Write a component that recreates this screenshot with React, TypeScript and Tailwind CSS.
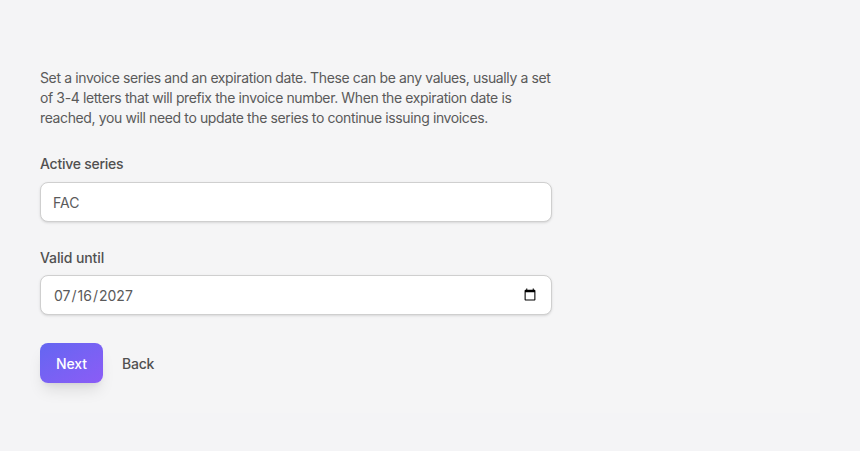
export default function App() {
  return (
    <div className="min-h-[451px] bg-[#f4f4f6] px-10 pt-10 font-['Inter',sans-serif]">
      <div className="h-[373px] bg-[#f5f5f6] pt-7">
        <div className="w-[512px]">
          <p className="text-[14px] leading-[20px] text-[#5a5a5a] tracking-[-0.38px]">
            Set a invoice series and an expiration date. These can be any values, usually a set of 3-4 letters that will prefix the invoice number. When the expiration date is reached, you will need to update the series to continue issuing invoices.
          </p>
          <label className="mt-[26px] block text-[14px] leading-[20px] font-[450] text-[#505050] tracking-[-0.25px]">Active series</label>
          <input defaultValue="FAC" className="mt-2 block h-10 w-full rounded-lg border border-[#cfcfcf] bg-white px-3 text-[14px] text-[#5a5a5a] shadow-sm outline-none" />
          <label className="mt-[26px] block text-[14px] leading-[20px] font-[450] text-[#505050] tracking-[-0.1px]">Valid until</label>
          <input type="date" defaultValue="2027-07-16" className="mt-[7px] block h-10 w-full rounded-lg border border-[#cfcfcf] bg-white px-3 text-[14px] text-[#5a5a5a] shadow-sm outline-none" />
          <div className="mt-7 flex items-center gap-[19px]">
            <button className="h-10 w-[63px] rounded-lg bg-gradient-to-br from-[#6366f1] to-[#8b5cf6] text-[14px] font-[450] text-white shadow-lg tracking-[-0.1px]">Next</button>
            <button className="text-[14px] font-[450] text-[#505050] tracking-[-0.2px]">Back</button>
          </div>
        </div>
      </div>
    </div>
  );
}
